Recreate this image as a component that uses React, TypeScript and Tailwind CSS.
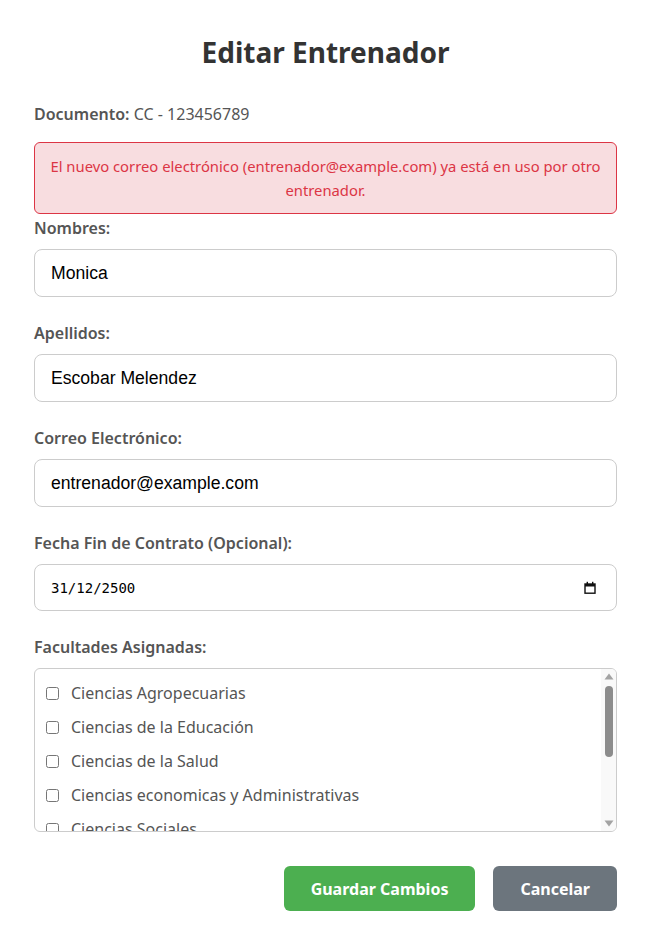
import { useState } from 'react';

const facultades = [
  'Ciencias Agropecuarias',
  'Ciencias de la Educación',
  'Ciencias de la Salud',
  'Ciencias economicas y Administrativas',
  'Ciencias Sociales',
  'Ingeniería',
  'Derecho y Ciencias Políticas',
];

const sans = { fontFamily: '"Noto Sans", sans-serif' };

function Field({ label, value, onChange }: { label: string; value: string; onChange: (v: string) => void }) {
  return (
    <div className="mb-6">
      <label className="block mb-[9px] text-[16px] leading-6 font-semibold text-[#555]">{label}</label>
      <input
        type="text"
        value={value}
        onChange={(e) => onChange(e.target.value)}
        className="w-full h-12 px-4 border border-[#ccc] rounded-lg bg-white text-black text-[17.6px] font-['Liberation_Sans',Arial,sans-serif] outline-none"
      />
    </div>
  );
}

export default function App() {
  const [nombres, setNombres] = useState('Monica');
  const [apellidos, setApellidos] = useState('Escobar Melendez');
  const [correo, setCorreo] = useState('entrenador@example.com');
  const [fecha, setFecha] = useState('31/12/2500');
  const [checked, setChecked] = useState<string[]>([]);

  function toggle(f: string) {
    setChecked((c) => (c.includes(f) ? c.filter((x) => x !== f) : [...c, f]));
  }

  return (
    <div className="min-h-screen bg-white font-['Noto_Sans',sans-serif]" style={sans}>
      <div className="px-[34px] pt-[30px] pb-7 w-[651px] box-border">
        <h1 className="text-center text-[28px] leading-[44px] font-bold text-[#333] mb-[28px]">Editar Entrenador</h1>
        <p className="text-[16px] leading-6 text-[#555] mb-[16px]">
          <span className="font-semibold">Documento:</span> CC - 123456789
        </p>
        <div className="mb-[2px] px-[8px] py-[11px] border border-[#dc3545] rounded-md bg-[#f8dde0] text-[#dc3545] text-[14.8px] leading-6 text-center">
          El nuevo correo electrónico (entrenador@example.com) ya está en uso por otro entrenador.
        </div>
        <form onSubmit={(e) => e.preventDefault()}>
          <Field label="Nombres:" value={nombres} onChange={setNombres} />
          <Field label="Apellidos:" value={apellidos} onChange={setApellidos} />
          <Field label="Correo Electrónico:" value={correo} onChange={setCorreo} />
          <div className="mb-6">
            <label className="block mb-[9px] text-[16px] leading-6 font-semibold text-[#555]">Fecha Fin de Contrato (Opcional):</label>
            <div className="relative">
              <input
                type="text"
                value={fecha}
                onChange={(e) => setFecha(e.target.value)}
                className="w-full h-[47px] pl-4 pr-10 border border-[#ccc] rounded-lg bg-white text-black text-[14px] font-['DejaVu_Sans_Mono',monospace] outline-none"
              />
              {/* calendar picker indicator */}
              <svg className="absolute right-[21px] top-[17px] pointer-events-none" width="12" height="13" viewBox="0 0 12 13">
                <rect x="1" y="3" width="10" height="9.2" fill="none" stroke="#111" strokeWidth="1.4" />
                <rect x="1" y="3" width="10" height="2.5" fill="#111" />
                <rect x="2.6" y="0.8" width="1.4" height="2.5" fill="#111" />
                <rect x="8" y="0.8" width="1.4" height="2.5" fill="#111" />
              </svg>
            </div>
          </div>
          <div className="mb-[34px]">
            <label className="block mb-[9px] text-[16px] leading-6 font-semibold text-[#555]">Facultades Asignadas:</label>
            <div className="h-[164px] flex border border-[#ccc] rounded-md overflow-hidden">
              <div className="flex-1 overflow-hidden pl-[11px] pt-[7px]">
                {facultades.map((f) => (
                  <label key={f} className="flex items-center h-[34px] text-[16px] text-[#555] cursor-pointer">
                    <input
                      type="checkbox"
                      checked={checked.includes(f)}
                      onChange={() => toggle(f)}
                      className="w-[13px] h-[13px] mr-3 ml-0"
                    />
                    {f}
                  </label>
                ))}
              </div>
              <div className="w-[15px] bg-[#f9f9f9] flex flex-col items-center pt-[4px] pb-[4px]">
                <svg width="10" height="7" viewBox="0 0 10 7"><path d="M5 0.5 L9.5 6.5 L0.5 6.5 Z" fill="#a3a3a3" /></svg>
                <div className="mt-[6px] w-[8px] h-[71px] rounded-full bg-[#8c8c8c]" />
                <div className="flex-1" />
                <svg width="10" height="7" viewBox="0 0 10 7"><path d="M0.5 0.5 L9.5 0.5 L5 6.5 Z" fill="#a3a3a3" /></svg>
              </div>
            </div>
          </div>
          <div className="flex justify-end gap-[18px]">
            <button type="submit" className="h-[45px] px-[27px] rounded-md bg-[#4caf50] text-white text-[16px] font-bold">
              Guardar Cambios
            </button>
            <button type="button" className="h-[45px] px-[27px] rounded-md bg-[#6c757d] text-white text-[16px] font-bold">
              Cancelar
            </button>
          </div>
        </form>
      </div>
    </div>
  );
}
